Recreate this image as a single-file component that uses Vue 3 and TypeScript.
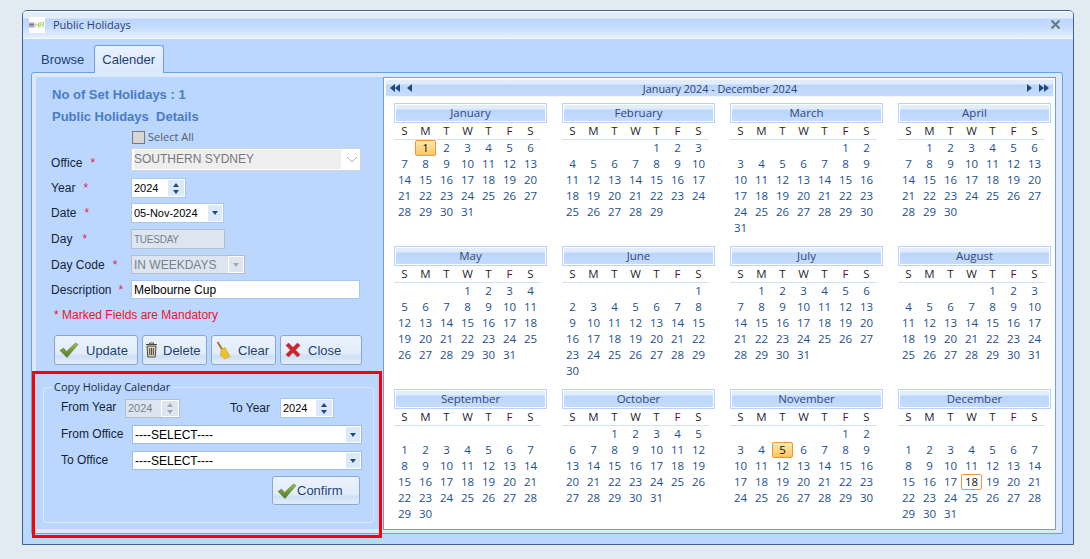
<script setup lang="ts">
const names = ['January','February','March','April','May','June','July','August','September','October','November','December']
const weekdays = ['S','M','T','W','T','F','S']
const months = names.map((name, m) => {
  const first = new Date(2024, m, 1).getDay()
  const offset = first === 0 ? 7 : first
  const count = new Date(2024, m + 1, 0).getDate()
  const cells: { key: string; day: number | null; cls: string }[] = []
  for (let i = 0; i < offset; i++) cells.push({ key: 'b' + i, day: null, cls: '' })
  for (let d = 1; d <= count; d++) {
    let cls = ''
    if ((m === 0 && d === 1) || (m === 10 && d === 5)) cls = 'selected'
    if (m === 11 && d === 18) cls = 'today'
    cells.push({ key: 'd' + d, day: d, cls })
  }
  return { name, cells }
})
</script>

<template>
  <div class="window">
    <header class="titlebar">
      <svg class="logo" width="16" height="16" viewBox="0 0 16 16">
        <rect width="16" height="16" fill="#fff"/>
        <rect x="0" y="5.500" width="5" height="5" fill="#b49cc4"/>
        <rect x="0" y="7" width="5" height="1" fill="#8a6aa8"/>
        <path d="M6 5.500v5M9.500 5.500v5M6 8h3.500" stroke="#a6cf72" stroke-width="1" fill="none"/>
        <path d="M11 10.500V5.800h3.500v2.200H11M13.500 8l1.500 2.500" stroke="#a6cf72" stroke-width="1" fill="none"/>
      </svg>
      <span class="title">Public Holidays</span>
      <svg class="close-x" width="11" height="11" viewBox="0 0 11 11">
        <path d="M1.500 1.500l8 8M9.500 1.500l-8 8" stroke="#6a7681" stroke-width="2" fill="none"/>
      </svg>
    </header>

    <nav class="tabs">
      <span class="tab">Browse</span>
      <span class="tab active">Calender</span>
    </nav>

    <section class="panel">
      <div class="left">
        <h2 class="h1">No of Set Holidays : 1</h2>
        <h2 class="h2">Public Holidays&nbsp; Details</h2>
        <div class="selectall"><span class="check"></span><span>Select All</span></div>

        <div class="row r-office">
          <label>Office<i style="margin-left:8px">*</i></label>
          <div class="field office"><span class="office-text">SOUTHERN SYDNEY</span>
            <svg width="12" height="7" viewBox="0 0 12 7"><path d="M1 1l5 5 5-5" stroke="#a9b0b8" fill="none"/></svg>
          </div>
        </div>
        <div class="row r-year">
          <label>Year<i style="margin-left:8px">*</i></label>
          <div class="field spin year small"><span>2024</span>
            <span class="spinbtn"><b class="up"></b><b class="down"></b></span>
          </div>
        </div>
        <div class="row r-date">
          <label>Date<i style="margin-left:8px">*</i></label>
          <div class="field date small"><span>05-Nov-2024</span><span class="dropbtn"><b class="down"></b></span></div>
        </div>
        <div class="row r-day">
          <label>Day<i style="margin-left:10px">*</i></label>
          <div class="field disabled day"><span>TUESDAY</span></div>
        </div>
        <div class="row r-code">
          <label>Day Code<i style="margin-left:8px">*</i></label>
          <div class="field disabled code"><span>IN WEEKDAYS</span><span class="dropbtn dis"><b class="down"></b></span></div>
        </div>
        <div class="row r-desc">
          <label>Description<i style="margin-left:7px">*</i></label>
          <div class="field desc"><span>Melbourne Cup</span></div>
        </div>

        <p class="mandatory">* Marked Fields are Mandatory</p>

        <div class="buttons">
          <button class="btn b-update">
            <svg width="20" height="18" viewBox="0 0 20 18">
              <defs><linearGradient id="chk" x1="0" y1="0" x2="0" y2="1"><stop offset="0" stop-color="#9cbb55"/><stop offset="1" stop-color="#4f7a25"/></linearGradient></defs>
              <path d="M1 9.500l3.500-2.500 3 3.500L16.500 2l2.500 1.500L8 16.500z" fill="url(#chk)" stroke="#5d8030" stroke-width=".6"/>
            </svg>
            <span>Update</span>
          </button>
          <button class="btn b-delete">
            <svg width="13" height="18" viewBox="0 0 13 18"><path d="M2 5h9l-.8 11H2.800z" fill="#d8d1ba" stroke="#4f4a3e"/><path d="M1 3.500h11M4.500 3.500V2h4v1.500M4.700 7v7M6.500 7v7M8.300 7v7" stroke="#4f4a3e" fill="none"/></svg>
            <span>Delete</span>
          </button>
          <button class="btn b-clear">
            <svg width="16" height="19" viewBox="0 0 16 19"><path d="M1.500 1l5 8" stroke="#a8772c" stroke-width="2"/><path d="M5 8.500l4-2 5 9-5.500 2.500-3-3.500-1 .5z" fill="#eec22e" stroke="#c79a18" stroke-width=".6"/></svg>
            <span>Clear</span>
          </button>
          <button class="btn b-close">
            <svg width="16" height="16" viewBox="0 0 16 16"><path d="M1 3.500L3.500 1 8 5.500 12.500 1 15 3.500 10.500 8 15 12.500 12.500 15 8 10.500 3.500 15 1 12.500 5.500 8z" fill="#d2232a" stroke="#a81c20" stroke-width=".5"/></svg>
            <span>Close</span>
          </button>
        </div>

        <fieldset class="copy">
          <legend>Copy Holiday Calendar</legend>
          <div class="copy-row c1">
            <label class="l-from">From Year</label>
            <div class="field disabled spin y2 small"><span>2024</span>
              <span class="spinbtn dis"><b class="up"></b><b class="down"></b></span>
            </div>
            <label class="l-to">To Year</label>
            <div class="field spin y3 small"><span>2024</span>
              <span class="spinbtn"><b class="up"></b><b class="down"></b></span>
            </div>
          </div>
          <div class="copy-row c2">
            <label class="l-office">From Office</label>
            <div class="field combo"><span>----SELECT----</span><span class="dropbtn"><b class="down"></b></span></div>
          </div>
          <div class="copy-row c3">
            <label class="l-office">To Office</label>
            <div class="field combo"><span>----SELECT----</span><span class="dropbtn"><b class="down"></b></span></div>
          </div>
          <button class="btn b-confirm">
            <svg width="20" height="18" viewBox="0 0 20 18"><path d="M1 9.500l3.500-2.500 3 3.500L16.500 2l2.500 1.500L8 16.500z" fill="url(#chk)" stroke="#5d8030" stroke-width=".6"/></svg>
            <span>Confirm</span>
          </button>
        </fieldset>
      </div>

      <div class="calendar">
        <div class="cal-head">
          <span class="nav">
            <svg width="11" height="8" viewBox="0 0 11 8"><path d="M5 0v8L0 4zM10 0v8L5 4z" fill="#1e4a80"/></svg>
            <svg class="nav-one" width="5" height="8" viewBox="0 0 5 8"><path d="M5 0v8L0 4z" fill="#1e4a80"/></svg>
          </span>
          <span class="cal-title">January 2024 - December 2024</span>
          <span class="nav">
            <svg class="nav-next" width="5" height="8" viewBox="0 0 5 8"><path d="M0 0v8l5-4z" fill="#1e4a80"/></svg>
            <svg width="11" height="8" viewBox="0 0 11 8"><path d="M0 0v8l5-4zM5 0v8l5-4z" fill="#1e4a80"/></svg>
          </span>
        </div>
        <div class="months">
          <div v-for="m in months" :key="m.name" class="month">
            <div class="m-title">{{ m.name }}</div>
            <div class="week">
              <span v-for="(w, i) in weekdays" :key="i" :class="{ fri: i === 5 }">{{ w }}</span>
            </div>
            <div class="days">
              <span v-for="c in m.cells" :key="c.key" class="cell" :class="c.cls">{{ c.day }}</span>
            </div>
          </div>
        </div>
      </div>

      <div class="red-box"></div>
    </section>
  </div>
</template>

<style>
html, body { margin: 0; background: #e3ebf2; }
</style>

<style scoped>
* { box-sizing: border-box; }
.window {
  position: absolute; left: 22px; top: 10px;
  width: 1052px; height: 535px;
  border: 1px solid #41628f; border-radius: 5px 5px 0 0;
  background: #bbd7fd;
  font-family: "Liberation Sans", Arial, sans-serif;
  font-size: 12px; color: #15233a;
  display: flex; flex-direction: column;
}
.titlebar {
  height: 28px; flex: none;
  display: flex; align-items: center;
  padding: 0 12px 0 6px;
  border-top: 1px solid #fff;
  border-bottom: 1px solid #f3f8ff;
  border-radius: 4px 4px 0 0;
  background: linear-gradient(#e2edfc 0, #e2edfc 6px, #bdd7fc 7px, #c2dafc 14px, #e9f1fd 27px);
}
.title { margin-left: 8px; margin-top: -2px; font-family: "Open Sans", sans-serif; font-size: 11px; color: #2b3f78; }
.close-x { margin-left: auto; margin-top: -2px; }
.tabs { height: 33px; flex: none; display: flex; align-items: flex-end; padding-left: 9px; }
.tab {
  height: 27px; padding: 0 9px; line-height: 29px;
  font-size: 13px; color: #1e3f74;
}
.tab.active {
  width: 70px; height: 28px; margin-left: 1px; padding: 0 7px; line-height: 27px;
  border: 1px solid #6f9fdc; border-bottom: 0; border-radius: 3px 3px 0 0;
  background: linear-gradient(#e9f1fd, #dbe8fb);
  position: relative; top: 1px; z-index: 1;
}
.panel {
  position: relative;
  margin-left: 8px; width: 1032px; height: 462px;
  border: 1px solid #6f9fdc; border-radius: 3px 3px 0 0;
  background: #dce9fb;
  padding: 4px 5px 4px 4px;
  display: flex;
}
.left { width: 347px; flex: none; background: #bbd7fd; padding-left: 15px; height: 452px; }
.h1, .h2 { margin: 0; font-size: 13px; line-height: 16px; font-weight: bold; color: #4a7cc4; padding-left: 1px; }
.h1 { margin-top: 10px; }
.h2 { margin-top: 6px; }
.selectall {
  margin-top: 5px; margin-left: 81px; height: 14px;
  display: flex; align-items: center; gap: 3px;
  font-size: 11px; line-height: 12px; color: #56606c; font-family: "Open Sans", sans-serif;
}
.selectall span:last-child { margin-top: -1px; }
.check { width: 13px; height: 13px; border: 1px solid #7a7a7a; background: #d6d6d6; }
.row { display: flex; align-items: center; }
.row label { width: 80px; flex: none; font-size: 12px; white-space: nowrap; letter-spacing: .05px; }
.row label i { color: #e8174e; font-style: normal; }
.r-office { margin-top: 4px; height: 23px; }
.r-office label { padding-top: 6px; }
.r-year { margin-top: 7px; height: 20px; }
.r-date { margin-top: 5px; height: 20px; }
.r-day { margin-top: 6px; height: 20px; }
.r-code { margin-top: 6px; height: 19px; }
.r-desc { margin-top: 6px; height: 19px; }
.field {
  display: flex; align-items: center; height: 100%;
  background: #fff; border: 1px solid #a9c7ee;
  padding-left: 2px; color: #000; font-size: 12px;
  position: relative;
}
.small { font-size: 11px; }
.office { width: 230px; border-color: #cdd5de; color: #77797c; font-size: 12px; background: #fff; padding: 1px 2px; }
.office-text { flex: none; width: 207px; height: 100%; background: #eeeeee; line-height: 19px; }
.office svg { margin-left: 5px; }
.year { width: 55px; }
.date { width: 93px; }
.day { width: 94px; font-size: 10px; letter-spacing: -.25px; }
.code { width: 114px; }
.desc { width: 229px; }
.disabled { background: #dde6f0; border-color: #b4bdc8; color: #77818d; }
.spinbtn {
  margin-left: auto; width: 18px; height: 100%;
  display: flex; flex-direction: column; align-items: center; justify-content: center; gap: 3px;
  background: #dce9fb; border: 1px solid #fff;
}
.dropbtn {
  margin-left: auto; width: 16px; height: 100%;
  display: flex; align-items: center; justify-content: center;
  background: #dce9fb; border: 1px solid #fff;
}
.dropbtn.dis, .spinbtn.dis { background: #dde6f0; }
.up, .down { width: 0; height: 0; border-left: 3.500px solid transparent; border-right: 3.500px solid transparent; }
.up { border-bottom: 4px solid #1e4a80; }
.down { border-top: 4px solid #1e4a80; }
.dis .up { border-bottom-color: #a0a8b2; }
.dis .down { border-top-color: #a0a8b2; }
.mandatory { margin: 8px 0 0 3px; height: 16px; line-height: 16px; color: #f5102f; font-size: 12px; }
.buttons { margin: 12px 0 0 3px; display: flex; }
.btn {
  height: 30px; padding: 0 0 0 4px;
  display: flex; align-items: center;
  border: 1px solid #8ba8cc; border-radius: 3px;
  background: linear-gradient(#eaf2fd 0, #e2edfb 62%, #cfe0f4 72%, #e2edfb 100%);
  font-family: "Liberation Sans", Arial, sans-serif;
  font-size: 13px; color: #1e3f74;
}
.b-update { width: 84px; } .b-update span { margin-left: 7px; }
.b-delete { width: 65px; margin-left: 4px; padding-left: 2px; } .b-delete span { margin-left: 5px; }
.b-clear { width: 65px; margin-left: 4px; } .b-clear span { margin-left: 6px; }
.b-close { width: 82px; margin-left: 4px; } .b-close span { margin-left: 7px; }
.copy {
  margin: 15px 0 0 -8px; padding: 0 0 0 17px; width: 331px; height: 143px;
  border: 1px solid #dde9fb; border-radius: 3px; min-width: 0;
}
.copy legend { margin-left: -9px; padding: 0 2px; font-size: 11px; line-height: 14px; font-family: "Open Sans", sans-serif; color: #1a2a44; }
.copy-row { display: flex; align-items: center; }
.c1 { margin-top: 4px; height: 20px; }
.c2 { margin-top: 7px; height: 19px; }
.c3 { margin-top: 7px; height: 19px; }
.l-from { width: 64px; margin-top: -2px; }
.y2 { width: 55px; height: 19px; }
.l-to { margin-left: 50px; width: 50px; }
.y3 { width: 54px; }
.l-office { width: 71px; margin-top: -2px; }
.c3 .l-office { margin-top: -1px; }
.combo { width: 230px; border-color: #9dbde8; }
.b-confirm { width: 88px; margin: 6px 0 0 211px; height: 29px; padding-left: 4px; }
.calendar {
  width: 673px; height: 453px;
  background: #fff; border: 1px solid #6f9fdc;
  font-family: "Open Sans", sans-serif;
}
.cal-head {
  height: 18px; margin: 1px;
  display: flex; align-items: center; justify-content: space-between;
  padding: 0 3px 0 4px;
  border: 1px solid #f2f7ff;
  background: linear-gradient(#e2edfc 0, #e2edfc 4px, #bad6fc 5px, #c7dcfc 100%);
  color: #2b4170; font-size: 10.800px;
}
.nav { display: flex; align-items: center; width: 40px; }
.nav:last-child { justify-content: flex-end; }
.nav-one { margin-left: 6px; }
.nav-next { margin-right: 7px; }
.months {
  padding: 5px 0 0 10px;
  display: grid; grid-template-columns: repeat(4, 153px); column-gap: 15px; grid-auto-rows: 143px;
}
.m-title {
  height: 20px; line-height: 18px; text-align: center;
  border: 1px solid #b7d3fb; outline: 1px solid #fff; outline-offset: -2px;
  background: linear-gradient(#e2edfc 0, #e2edfc 5px, #bad6fc 6px, #c6dcfc 100%);
  color: #35477d; font-size: 11.500px;
}
.week {
  width: 147px; height: 17px;
  display: grid; grid-template-columns: repeat(7, 21px);
  border-bottom: 1px solid #d5e0ee;
  text-align: center; font-size: 11.500px; line-height: 15px; color: #1f2530;
}
.week .fri { color: #5a0a4a; }
.days {
  width: 147px;
  display: grid; grid-template-columns: repeat(7, 21px); grid-auto-rows: 16px;
  text-align: center; font-size: 11.500px; line-height: 16px; color: #22508f;
}
.cell { border-radius: 2px; }
.selected {
  border: 1px solid #f2953a; line-height: 14px; color: #111;
  background: linear-gradient(#fdeaa9, #fbc560);
}
.today { border: 1px solid #f2953a; line-height: 14px; color: #111; }
.red-box {
  position: absolute; left: 0; top: 298px;
  width: 350px; height: 167px;
  border: 3px solid #f00; pointer-events: none;
}
</style>
